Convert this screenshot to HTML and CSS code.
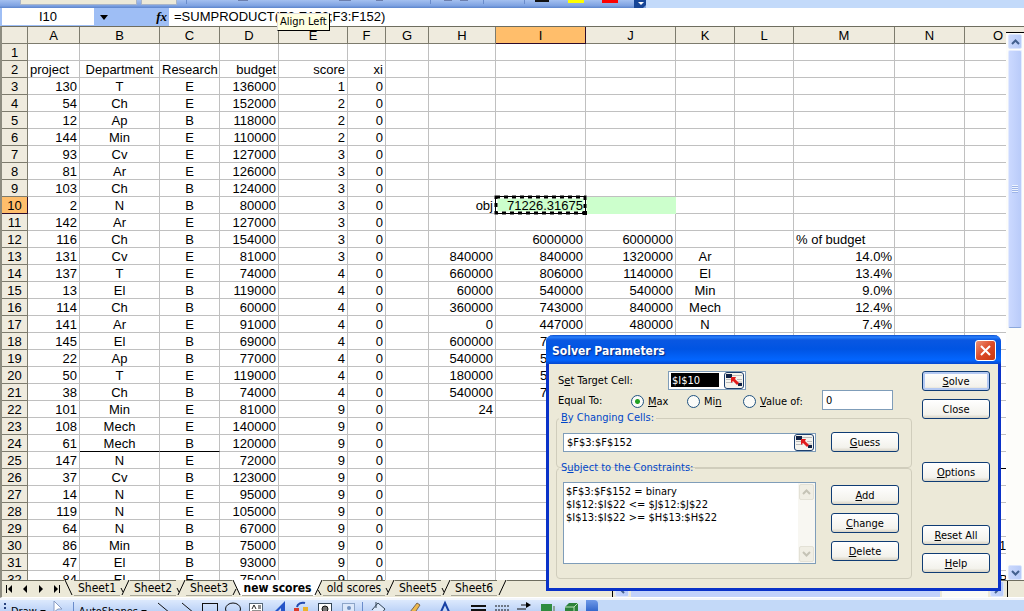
FILE: index.html
```html
<!DOCTYPE html>
<html lang="en">
<head>
<meta charset="utf-8">
<title>new scores</title>
<link rel="stylesheet" href="styles.css">
</head>
<body class="app">
<div class="topbar">
  <div class="topbar-tools">
    <span class="combo combo-wide"></span><span class="combo"></span>
    <svg class="top-icons" width="453" height="8" viewBox="0 0 453 8">
      <path d="M5.500 0v4M249.500 0v4M302.500 0v4M343.500 0v4" stroke="#6a8ccb"/>
      <path d="M57 .5h10M158 .5h12M263 .5h8M279 .5h8M195 .5h7" stroke="#6c7fae"/>
      <path d="M354 1h14" stroke="#111" stroke-width="2"/>
      <path d="M387 1.500h16" stroke="#ff0" stroke-width="3"/>
      <path d="M421 1.500h16" stroke="#f00" stroke-width="3"/>
    </svg>
  </div>
  <svg class="top-end" width="12" height="8" viewBox="0 0 12 8"><path d="M0 0h12v5l-3 3H0z" fill="#164596"/><path d="M4 2h6L7 5z" fill="#fff"/></svg>
</div>
<div class="formula-bar">
  <input class="name-box" aria-label="Name box" value="I10">
  <button class="name-drop" aria-label="Named ranges"><svg width="8" height="5" viewBox="0 0 8 5"><path d="M0 0h8L4 5z"/></svg></button>
  <button class="fx" aria-label="Insert function">fx</button>
  <input class="formula" aria-label="Formula" value="=SUMPRODUCT(E3:E152;F3:F152)">
</div>
<div class="tip" role="tooltip">Align Left</div>
<main class="workbook">
  <div class="sheet">
    <table class="grid">
      <colgroup><col class="w-head"><col class="w-a"><col class="w-b"><col class="w-c"><col class="w-d"><col class="w-e"><col class="w-f"><col class="w-g"><col class="w-h"><col class="w-i"><col class="w-i"><col class="w-k"><col class="w-k"><col class="w-m"><col class="w-n"><col class="w-o"></colgroup>
      <thead><tr id="letters"></tr></thead>
      <tbody id="cells"></tbody>
    </table>
  </div>
  <div class="vscroll">
    <span class="split"></span>
    <button class="sbtn" aria-label="Scroll up"><svg width="9" height="6" viewBox="0 0 9 6"><path d="M1 5l3.500-3.500L8 5"/></svg></button>
    <span class="vthumb"><span class="grip"></span></span>
    <span class="vtrack"></span>
    <button class="sbtn" aria-label="Scroll down"><svg width="9" height="6" viewBox="0 0 9 6"><path d="M1 1l3.500 3.500L8 1"/></svg></button>
  </div>
</main>
<div class="tabstrip">
  <div class="navs">
    <button class="nav" aria-label="First sheet"><svg width="9" height="8" viewBox="0 0 9 8"><path d="M1 0h1v8H1zM7 0v8L3 4z"/></svg></button>
    <button class="nav" aria-label="Previous sheet"><svg width="9" height="8" viewBox="0 0 9 8"><path d="M6 0v8L2 4z"/></svg></button>
    <button class="nav" aria-label="Next sheet"><svg width="9" height="8" viewBox="0 0 9 8"><path d="M3 0v8l4-4z"/></svg></button>
    <button class="nav" aria-label="Last sheet"><svg width="9" height="8" viewBox="0 0 9 8"><path d="M2 0v8l4-4zM7 0h1v8H7z"/></svg></button>
  </div>
  <svg class="slant" width="10" height="17" viewBox="0 0 10 17"><path d="M1 0l7 15"/></svg>
  <button class="tab">Sheet1</button>
  <svg class="slant" width="10" height="17" viewBox="0 0 10 17"><path d="M9 0L2 15M1 8l2 4"/></svg>
  <button class="tab">Sheet2</button>
  <svg class="slant" width="10" height="17" viewBox="0 0 10 17"><path d="M9 0L2 15M1 8l2 4"/></svg>
  <button class="tab">Sheet3</button>
  <svg class="slant" width="10" height="17" viewBox="0 0 10 17"><path class="page" d="M1 0h9v16H9z"/><path d="M1 0l7 15M4 9L1 15"/></svg>
  <button class="tab active">new scores</button>
  <svg class="slant" width="10" height="17" viewBox="0 0 10 17"><path class="page" d="M0 0h9L2 16H0z"/><path d="M9 0L2 15M5 10l3 5"/></svg>
  <button class="tab tab-mid">old scores</button>
  <svg class="slant" width="10" height="17" viewBox="0 0 10 17"><path d="M9 0L2 15M1 8l2 4"/></svg>
  <button class="tab">Sheet5</button>
  <svg class="slant" width="10" height="17" viewBox="0 0 10 17"><path d="M9 0L2 15M1 8l2 4"/></svg>
  <button class="tab">Sheet6</button>
  <svg class="slant" width="10" height="17" viewBox="0 0 10 17"><path d="M9 0L2 15"/></svg>
  <div class="hscroll">
    <span class="hedge"></span>
    <button class="sbtn hbtn" aria-label="Scroll left"><svg width="6" height="9" viewBox="0 0 6 9"><path d="M5 1L1.500 4.500 5 8"/></svg></button>
    <span class="hthumb"></span><span class="htrack"></span>
    <button class="sbtn hbtn" aria-label="Scroll right"><svg width="6" height="9" viewBox="0 0 6 9"><path d="M1 1l3.500 3.500L1 8"/></svg></button>
    <span class="hedge"></span>
  </div>
</div>
<div class="drawbar">
  <div class="draw-tools">
    <span class="dots"></span>
    <button class="draw-btn">Draw <span class="caret"></span></button>
    <svg class="draw-cursor" width="14" height="14" viewBox="0 0 14 14"><path d="M3 1l8 8H7l-4 3z" fill="#fff" stroke="#889cc4"/></svg>
    <span class="vsep"></span>
    <button class="draw-btn">AutoShapes <span class="caret"></span></button>
    <svg width="434" height="14" viewBox="152 0 434 14">
      <g fill="none" stroke="#111"><path d="M158 3l12 10M182 3l12 10"/><rect x="202.500" y="3.500" width="15" height="10"/><ellipse cx="233" cy="9" rx="7.500" ry="6"/></g>
      <rect x="249.500" y="3.500" width="13" height="13" fill="#fff" stroke="#567"/><path d="M252 9l2-4 2 4M258 6h3M258 8h3M252 11h9" stroke="#222" fill="none"/>
      <path d="M274 12L285 1v13h-4V8l-5 5z" fill="#2554c7"/>
      <path d="M297 7a6 5 0 0 1 8-4" stroke="#234bb0" stroke-width="2" fill="none"/><rect x="294" y="8" width="5" height="6" fill="#d93a2b"/><rect x="303" y="7" width="5" height="7" fill="#e9b22d"/>
      <rect x="318.500" y="3.500" width="13" height="13" fill="#fff" stroke="#345"/><circle cx="325" cy="9" r="3" fill="#777" stroke="#111"/>
      <rect x="342.500" y="3.500" width="12" height="13" fill="#dce8fa" stroke="#8da5c8"/><circle cx="349" cy="8" r="2" fill="#7090bf"/>
      <path d="M362.500 2v12" stroke="#6a8ccb"/>
      <path d="M372 10l6-7 7 6-4 5M376 2v6" fill="#dbe8fb" stroke="#345"/>
      <path d="M410 12l7-9 3 2-6 9z" fill="#edb84c" stroke="#765"/>
      <path d="M440 14l5-11 5 11" fill="none" stroke="#1740a4" stroke-width="2"/>
      <path d="M471 6h15M471 10h15" stroke="#111" stroke-width="2"/><path d="M495 6h14M495 10h14" stroke="#111" stroke-dasharray="2 1"/>
      <path d="M517 9h9M521 5h7" stroke="#111"/><path d="M526 2l5 3-5 3z"/>
      <rect x="541" y="4" width="11" height="11" fill="#2f8c40"/><path d="M544 15h10V6" stroke="#8ba39a" stroke-width="2" fill="none"/><path d="M565 7l4-4h9v9l-4 4h-9z" fill="#2c823b"/><path d="M565 7h9l4-4M574 7v8" stroke="#b9dfbb" fill="none"/>
    </svg>
  </div>
  <span class="draw-end"></span>
</div>

<form class="dialog" role="dialog" aria-labelledby="dlg-title">
  <header class="titlebar"><h1 class="title" id="dlg-title">Solver Parameters</h1>
    <button type="button" class="close" aria-label="Close window"><svg width="13" height="13" viewBox="0 0 13 13"><path d="M2 2l9 9M11 2l-9 9"/></svg></button></header>
  <div class="dlg-body">
    <div class="left">
      <div class="row">
        <label class="cap cap-target" for="target">S<u>e</u>t Target Cell:</label>
        <span class="ref"><input class="ref-input marked" id="target" value="$I$10"><button type="button" class="ref-btn" aria-label="Pick target cell"><svg width="17" height="13" viewBox="0 0 17 13"><path d="M0 0h6v4H0z" fill="#124"/><path d="M6 1.500h10M0 5.500h5M0 8.500h7M11 5.500h5M11 8h5" stroke="#bbb"/><path d="M12 9h4v3h-4z" fill="#124"/><path d="M5 3h5L9 5l4 4-2 2-4-4-2 2z" fill="#e11b1b"/></svg></button></span>
      </div>
      <div class="row row-equal">
        <span class="cap cap-equal">Equal To:</span>
        <label class="opt"><input class="radio" type="radio" name="goal" checked><span><u>M</u>ax</span></label>
        <label class="opt"><input class="radio" type="radio" name="goal"><span>Mi<u>n</u></span></label>
        <label class="opt opt-value"><input class="radio" type="radio" name="goal"><span><u>V</u>alue of:</span></label>
        <input class="value" aria-label="Target value" value="0">
      </div>
      <fieldset class="group">
        <legend><u>B</u>y Changing Cells:</legend>
        <div class="group-row">
          <span class="ref ref-wide"><input class="ref-input" aria-label="Changing cells" value="$F$3:$F$152"><button type="button" class="ref-btn" aria-label="Pick changing cells"><svg width="17" height="13" viewBox="0 0 17 13"><path d="M0 0h6v4H0z" fill="#124"/><path d="M6 1.500h10M0 5.500h5M0 8.500h7M11 5.500h5M11 8h5" stroke="#bbb"/><path d="M12 9h4v3h-4z" fill="#124"/><path d="M5 3h5L9 5l4 4-2 2-4-4-2 2z" fill="#e11b1b"/></svg></button></span>
          <button type="button" class="btn"><span><u>G</u>uess</span></button>
        </div>
      </fieldset>
      <fieldset class="group group-list">
        <legend>S<u>u</u>bject to the Constraints:</legend>
        <div class="group-row">
          <div class="list">
            <select class="list-box" size="6" aria-label="Constraints"><option>$F$3:$F$152 = binary</option><option>$I$12:$I$22 &lt;= $J$12:$J$22</option><option>$I$13:$I$22 &gt;= $H$13:$H$22</option></select>
            <div class="list-scroll">
              <button type="button" class="off" disabled aria-label="Up"><svg width="9" height="6" viewBox="0 0 9 6"><path d="M1 5l3.500-3.500L8 5"/></svg></button>
              <button type="button" class="off" disabled aria-label="Down"><svg width="9" height="6" viewBox="0 0 9 6"><path d="M1 1l3.500 3.500L8 1"/></svg></button>
            </div>
          </div>
          <div class="stack">
            <button type="button" class="btn"><span><u>A</u>dd</span></button>
            <button type="button" class="btn"><span><u>C</u>hange</span></button>
            <button type="button" class="btn"><span><u>D</u>elete</span></button>
          </div>
        </div>
      </fieldset>
    </div>
    <div class="right">
      <div class="stack">
        <button type="button" class="btn default"><span><u>S</u>olve</span></button>
        <button type="button" class="btn">Close</button>
      </div>
      <button type="button" class="btn"><span><u>O</u>ptions</span></button>
      <div class="stack">
        <button type="button" class="btn"><span><u>R</u>eset All</span></button>
        <button type="button" class="btn"><span><u>H</u>elp</span></button>
      </div>
    </div>
  </div>
</form>
<script src="sheet.js"></script>
</body>
</html>
```
FILE: styles.css
```css
* { box-sizing: border-box; }
.app {
  margin: 0; height: 100vh; overflow: hidden; position: relative;
  display: flex; flex-direction: column;
  font: 12px "DejaVu Sans Condensed", Tahoma, "Noto Sans", sans-serif;
  color: #000; background: #c3d9f8;
}
button, input, select { font: inherit; color: inherit; margin: 0; padding: 0; border: 0; border-radius: 0; outline: 0; background: none; }
button { display: flex; align-items: center; justify-content: center; }
svg { display: block; flex: none; }

.topbar { flex: none; height: 8px; display: flex; background: #c3dafa; }
.topbar-tools { display: flex; gap: 4px; padding-left: 20px; background: linear-gradient(#a4c0f0, #7fa3e2 70%, #5c84cc); }
.combo { width: 36px; height: 5px; background: #ece9d8; border: 1px solid #a9b5c8; border-top: 0; }
.combo-wide { width: 117px; }
.top-end { background: #7fa3e2; }

.formula-bar { flex: none; height: 18px; display: flex; padding-left: 2px; background: #9ebef5; font: 13px "Liberation Sans", Arial, sans-serif; }
.name-box { width: 92px; background: #fff; text-align: center; height: 17px; }
.name-drop { width: 20px; }
.fx { width: 55px; justify-content: flex-end; padding-right: 2px; font: italic bold 13px "Liberation Serif", serif; }
.formula { flex: 1; min-width: 0; background: #fff; padding: 0 0 2px 5px; }
.tip { position: absolute; left: 277px; top: 13px; height: 18px; padding: 0 2px; line-height: 16px; background: #ffffe1; border: 1px solid #000; border-top-color: #ddd; border-left-color: #ddd; z-index: 2; font-size: 11px; }

.workbook { flex: 1; min-height: 0; display: flex; background: #fdfdfa; }
.sheet { flex: 1; min-width: 0; overflow: hidden; background: #fff; border-top: 1px solid #6e6d5f; border-left: 2px solid #8d8c80; }
.grid { table-layout: fixed; width: 1030px; border-collapse: separate; border-spacing: 0; font: 13px "Liberation Sans", Arial, sans-serif; }
.w-head { width: 26px; } .w-a { width: 52px; } .w-b { width: 80px; } .w-c { width: 60px; } .w-d { width: 59px; }
.w-e { width: 69px; } .w-f { width: 38px; } .w-g { width: 43px; } .w-h { width: 67px; } .w-i { width: 90px; }
.w-k { width: 59px; } .w-m { width: 101px; } .w-n { width: 70px; } .w-o { width: 67px; }
.grid th, .grid td { height: 17px; line-height: 15px; padding: 1px 2px 0; white-space: nowrap; overflow: hidden; border-right: 1px solid #c0c0c0; border-bottom: 1px solid #c0c0c0; text-align: right; }
.grid th { background: #efebde; font-weight: normal; text-align: center; padding: 1px 0 0; border-color: #7d7b6d; }
.grid th.current { background: #ffbe6b; border-color: #2b0a2b; }
.grid td.mid { text-align: center; }
.grid td.start { text-align: left; }
.grid td.peek { text-align: left; padding-left: 44px; }
.grid td.far { text-align: left; padding-left: 34px; }
.grid td.rule { border-bottom-color: #000; }
.grid td.fill { background: #cfc; border-color: #cfc; }
.grid td.selected { position: relative; overflow: visible; }
.ants { position: absolute; left: -2px; top: -2px; pointer-events: none; }

.vscroll { width: 18px; padding: 0 2px; display: flex; flex-direction: column; align-items: center; gap: 1px; }
.split { width: 18px; height: 7px; background: #efebde; border-top: 1px solid #6e6d5f; border-bottom: 1px solid #000; flex: none; }
.sbtn { width: 14px; height: 15px; flex: none; background: linear-gradient(90deg, #cad8fc, #b8cbf8); border: 1px solid #dce6fd; border-radius: 2px; }
.sbtn path, .off path { fill: none; stroke: #43608f; stroke-width: 2; }
.vthumb { flex: 277; width: 14px; background: linear-gradient(90deg, #cbd9ff, #b9cbf9); border: 1px solid #e4ebfe; border-bottom-color: #8ca8dc; display: flex; align-items: center; justify-content: center; border-radius: 2px; }
.grip { width: 6px; height: 8px; background: repeating-linear-gradient(#eef4fe 0 1px, #9db4e8 1px 2px); }
.vtrack { flex: 236; }

.tabstrip { flex: none; height: 18px; display: flex; background: #ece9d8; border-left: 2px solid #8d8c80; border-bottom: 1px solid #fff; font-size: 12px; }
.navs { display: flex; width: 62px; border-top: 1px solid #6e6d5f; }
.nav { width: 16px; }
.tab { width: 46px; height: 16px; border-top: 1px solid #6e6d5f; border-bottom: 1px solid #aaa899; }
.tab-mid { width: 62px; }
.tab.active { width: 71px; background: #fff; font-weight: bold; border-top-color: #fff; }
.slant path { fill: none; stroke: #000; }
.slant .page { fill: #fff; stroke: none; }
.hscroll { flex: 1; min-width: 0; display: flex; padding-left: 104px; padding-right: 16px; gap: 2px; border-top: 1px solid #6e6d5f; align-items: stretch; }
.hedge { width: 2px; border-right: 1px solid #000; }
.hbtn { height: auto; }
.hthumb { flex: 312; background: #c2d2fb; }
.htrack { flex: 46; background: #fafaf5; }

.drawbar { flex: none; height: 13px; display: flex; background: #c3d9f8; border-top: 2px solid #f3f6fb; overflow: hidden; }
.draw-tools { display: flex; flex: none; background: linear-gradient(#dce9fd, #bdd3f7); padding-left: 4px; align-items: flex-start; }
.dots { width: 2px; height: 12px; margin-top: 3px; background: repeating-linear-gradient(#27417d 0 2px, transparent 2px 4px); }
.draw-btn { height: 22px; gap: 3px; padding: 0 5px; font-size: 11px; }
.caret { border: 3px solid transparent; border-top-color: #000; border-bottom: 0; }
.vsep { width: 1px; height: 12px; margin: 2px 0 0 8px; background: #6a8ccb; }
.draw-end { width: 12px; background: linear-gradient(#6f9ae8, #3468cc); border-top-right-radius: 4px; }

.dialog { position: absolute; right: 23px; top: 335px; width: 455px; background: #ece9d8; border: 3px solid #0a32c8; border-top: 0; border-radius: 7px 7px 0 0; font-size: 11px; z-index: 3; }
.titlebar { height: 29px; margin: 0 -3px; padding: 0 5px 0 6px; display: flex; align-items: center; justify-content: space-between; border-radius: 7px 7px 0 0; background: linear-gradient(#0a4fd0, #2a80fb 2px, #0a58e2 5px, #0054e3 14px, #0366ff 25px, #0547ce); }
.title { margin: 3px 0 0; font: bold 12px "DejaVu Sans Condensed", "Trebuchet MS", sans-serif; color: #fff; text-shadow: 1px 1px 1px #0b2a80; }
.close { width: 21px; height: 21px; margin-top: 2px; border: 1px solid #fff; border-radius: 3px; background: linear-gradient(135deg, #ee9277, #dc4a27 50%, #c8380f); }
.close path { stroke: #fff; stroke-width: 2; }
.dlg-body { display: flex; gap: 10px; padding: 7px 8px 9px 7px; }
.left { flex: 1; min-width: 0; }
.row { display: flex; align-items: center; height: 18px; padding-left: 2px; }
.row-equal { height: 22px; }
.cap-target { width: 110px; }
.cap-equal { width: 73px; }
.ref { display: flex; align-items: center; width: 78px; height: 19px; padding: 0 1px; background: #fff; border: 1px solid #7f9db9; }
.ref-wide { width: 253px; }
.ref-input { flex: 1; min-width: 0; padding-left: 2px; height: 15px; }
.marked { background: #000; color: #fff; margin: 0 5px 0 1px; padding-left: 1px; height: 14px; }
.ref-btn { width: 20px; height: 17px; border: 1px solid #1c3f6e; border-radius: 3px; background: #f5f4ee; }
.opt { display: flex; align-items: center; gap: 4px; width: 56px; padding-top: 2px; }
.opt-value { width: 79px; }
.radio { appearance: none; width: 13px; height: 13px; flex: none; border: 1px solid #1f5280; border-radius: 50%; background: #fbfbf8; }
.radio:checked { background: radial-gradient(#21a121 0 2px, #fbfbf8 3px); }
.value { width: 71px; height: 20px; padding-left: 3px; background: #fff; border: 1px solid #7f9db9; }
.group { margin: 0; min-width: 0; padding: 7px 12px 15px 6px; border: 1px solid #d0cdbc; border-radius: 4px; }
.group legend { padding: 0 2px; margin-left: -4px; height: 14px; line-height: 14px; color: #0046c8; }
.group-list { margin-top: -7px; padding-bottom: 14px; }
.group-row { display: flex; justify-content: space-between; align-items: center; }
.list { width: 253px; height: 82px; display: flex; border: 1px solid #7f9db9; background: #fff; }
.list-box { flex: 1; min-width: 0; overflow: hidden; padding-top: 2px; }
.list-box option { height: 13px; min-height: 13px; line-height: 13px; padding: 0 2px; }
.list-scroll { width: 17px; display: flex; flex-direction: column; justify-content: space-between; padding: 1px; background: #f8f7f2; }
.off { width: 15px; height: 16px; border: 1px solid #e3e1d6; border-radius: 2px; background: #f0eee4; }
.off path { stroke: #c5c3b6; }
.stack { display: flex; flex-direction: column; gap: 8px; }
.btn { width: 68px; height: 20px; border: 1px solid #0f3c74; border-radius: 3px; background: linear-gradient(#fff, #f3f2ec 80%, #d9d4c6); }
.default { box-shadow: inset 0 0 0 2px #b4c9f2; }
.right { display: flex; flex-direction: column; justify-content: space-between; padding-bottom: 6px; }
```
FILE: sheet.js
```js
const left = [
  [130,'T','E',136000,1],[54,'Ch','E',152000,2],[12,'Ap','B',118000,2],[144,'Min','E',110000,2],
  [93,'Cv','E',127000,3],[81,'Ar','E',126000,3],[103,'Ch','B',124000,3],[2,'N','B',80000,3],
  [142,'Ar','E',127000,3],[116,'Ch','B',154000,3],[131,'Cv','E',81000,3],[137,'T','E',74000,4],
  [13,'El','B',119000,4],[114,'Ch','B',60000,4],[141,'Ar','E',91000,4],[145,'El','B',69000,4],
  [22,'Ap','B',77000,4],[50,'T','E',119000,4],[38,'Ch','B',74000,4],[101,'Min','E',81000,9],
  [108,'Mech','E',140000,9],[61,'Mech','B',120000,9],[147,'N','E',72000,9],[37,'Cv','B',123000,9],
  [14,'N','E',95000,9],[119,'N','E',105000,9],[64,'N','B',67000,9],[86,'Min','B',75000,9],
  [47,'El','B',93000,9],[84,'El','E',75000,9]
];
const values = {
  A2:'project', B2:'Department', C2:'Research', D2:'budget', E2:'score', F2:'xi',
  H10:'obj', I10:'71226.31675', I12:6000000, J12:6000000, M12:'% of budget',
  H13:840000, I13:840000, J13:1320000, K13:'Ar', M13:'14.0%',
  H14:660000, I14:806000, J14:1140000, K14:'El', M14:'13.4%',
  H15:60000, I15:540000, J15:540000, K15:'Min', M15:'9.0%',
  H16:360000, I16:743000, J16:840000, K16:'Mech', M16:'12.4%',
  H17:0, I17:447000, J17:480000, K17:'N', M17:'7.4%',
  H18:600000, I18:7, H19:540000, I19:5, H20:180000, I20:5, H21:540000, I21:7, H22:24,
  O30:1, O32:'B'
};
left.forEach((row, i) => {
  [...row, 0].forEach((v, c) => { values['ABCDEF'[c] + (i + 3)] = v; });
});
const styles = {
  A2:'start', M12:'start', B24:'mid rule', C24:'mid rule', O25:'rule', I10:'fill selected', J10:'fill',
  I18:'peek', I19:'peek', I20:'peek', I21:'peek', O30:'far', O32:'far'
};
const letters = 'ABCDEFGHIJKLMNO';
const head = document.getElementById('letters');
head.append(document.createElement('th'));
for (const l of letters) {
  const th = document.createElement('th');
  th.textContent = l;
  if (l === 'I') th.className = 'current';
  head.append(th);
}
const body = document.getElementById('cells');
for (let r = 1; r <= 32; r++) {
  const tr = body.insertRow();
  const th = document.createElement('th');
  th.textContent = r;
  if (r === 10) th.className = 'current';
  tr.append(th);
  for (const l of letters) {
    const td = tr.insertCell();
    const key = l + r;
    td.textContent = values[key] ?? '';
    td.className = styles[key] || ('BCK'.includes(l) ? 'mid' : '');
    if (key === 'I10') {
      td.insertAdjacentHTML('beforeend', '<svg class="ants" width="94" height="20" viewBox="0 0 94 20"><rect x="2" y="2" width="89" height="16" fill="none" stroke="#fff" stroke-width="3"/><rect x="1.500" y="1.500" width="90" height="17" fill="none" stroke="#000"/><rect x="2" y="2" width="89" height="16" fill="none" stroke="#000" stroke-width="3" stroke-dasharray="4 4"/><path d="M89 16h4v4h-4z"/></svg>');
    }
  }
}
```
